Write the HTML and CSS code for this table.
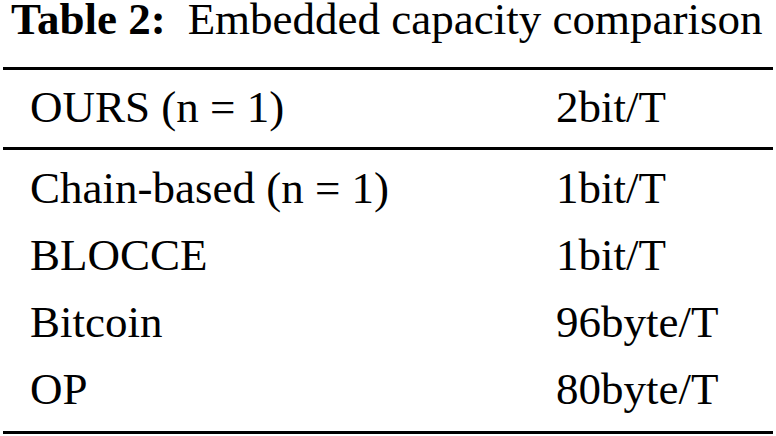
FILE: index.html
```html
<!DOCTYPE html>
<html lang="en">
<head>
  <meta charset="UTF-8" />
  <title>Table 2</title>
  <link rel="stylesheet" href="styles.css">
</head>
<body>
  <div class="caption"><b>Table 2:</b><span class="caption-text">Embedded capacity comparison</span></div>
  <div class="head">
    <div class="row">
      <span class="name">OURS (n = 1)</span>
      <span class="value">2bit/T</span>
    </div>
  </div>
  <div class="body">
    <div class="row">
      <span class="name">Chain-based (n = 1)</span>
      <span class="value">1bit/T</span>
    </div>
    <div class="row">
      <span class="name">BLOCCE</span>
      <span class="value">1bit/T</span>
    </div>
    <div class="row">
      <span class="name">Bitcoin</span>
      <span class="value">96byte/T</span>
    </div>
    <div class="row">
      <span class="name">OP</span>
      <span class="value">80byte/T</span>
    </div>
  </div>
</body>
</html>
```

FILE: styles.css
```css
body {
  margin: 0;
  padding: 0;
  background: #fff;
  color: #000;
  font-family: "Liberation Serif", "Times New Roman", serif;
  font-size: 45px;
  width: 776px;
}
.caption {
  line-height: 38px;
  padding-left: 11px;
  margin-bottom: 29px;
  white-space: nowrap;
}
.caption-text {
  margin-left: 22px;
}
.head {
  margin: 0 3px;
  border-top: 3px solid #000;
  border-bottom: 3px solid #000;
  padding: 4px 0 6px;
}
.body {
  margin: 0 3px;
  border-bottom: 3px solid #000;
  padding: 5px 0 8px;
}
.row {
  display: grid;
  grid-template-columns: 526px 1fr;
  padding-left: 27px;
  line-height: 67px;
  white-space: nowrap;
}
```
